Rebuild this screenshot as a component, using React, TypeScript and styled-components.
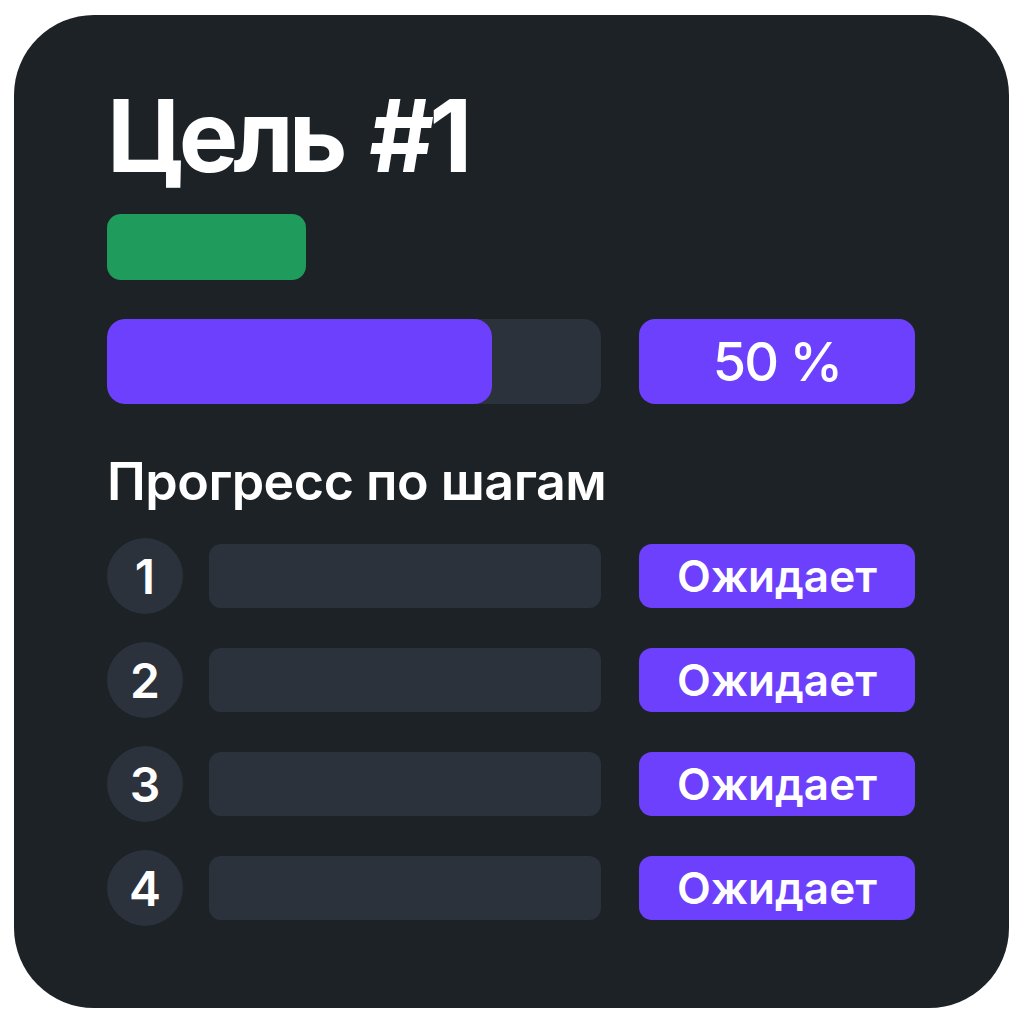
import React from "react";
import styled, { createGlobalStyle } from "styled-components";

const Global = createGlobalStyle`
  html, body { margin: 0; padding: 0; background: #ffffff; }
  body { font-family: Inter, "Noto Sans", sans-serif; }
`;

const Card = styled.div`
  box-sizing: border-box;
  margin: 15px 0 0 14px;
  width: 995px;
  height: 993px;
  border-radius: 80px;
  background: #1d2227;
  padding: 71px 94px 0 93px;
  display: flex;
  flex-direction: column;
  color: #ffffff;
`;

const Title = styled.h1`
  margin: 0;
  font-size: 100px;
  line-height: 100px;
  font-weight: 700;
  letter-spacing: -5px;
  word-spacing: 8px;
`;

const Tag = styled.div`
  margin-top: 28px;
  width: 199px;
  height: 66px;
  border-radius: 14px;
  background: #1f9b5c;
`;

const ProgressRow = styled.div`
  margin-top: 39px;
  display: grid;
  grid-template-columns: 1fr 276px;
  column-gap: 38px;
  height: 85px;
`;

const Track = styled.div`
  border-radius: 18px;
  background: #2c323b;
  overflow: hidden;
  display: flex;
`;

const Fill = styled.div`
  height: 100%;
  border-radius: 18px;
  background: #6d40fd;
`;

const Badge = styled.div<{ $big?: boolean }>`
  border-radius: ${(p) => (p.$big ? 16 : 13)}px;
  background: #6d40fd;
  display: flex;
  align-items: center;
  justify-content: center;
  font-size: ${(p) => (p.$big ? 54 : 44)}px;
  font-weight: ${(p) => (p.$big ? 500 : 600)};
  letter-spacing: ${(p) => (p.$big ? -2 : 0)}px;
  color: #ffffff;
`;

const Heading = styled.h2`
  margin: 52px 0 0;
  font-size: 52px;
  line-height: 52px;
  font-weight: 600;
  letter-spacing: -0.5px;
`;

const Steps = styled.div`
  margin-top: 36px;
  display: flex;
  flex-direction: column;
  gap: 40px;
`;

const StepRow = styled.div`
  display: grid;
  grid-template-columns: 76px 1fr 276px;
  grid-template-rows: 64px;
  column-gap: 26px;
  align-items: stretch;
`;

const Num = styled.div`
  align-self: center;
  width: 76px;
  height: 76px;
  margin: -6px 0 -6px;
  border-radius: 50%;
  background: #2c323b;
  display: flex;
  align-items: center;
  justify-content: center;
  font-size: 48px;
  font-weight: 600;
`;

const StepBar = styled.div`
  margin-right: 12px;
  border-radius: 12px;
  background: #2c323b;
`;

const steps = [1, 2, 3, 4];

export default function App() {
  const progress = 78;
  return (
    <>
      <Global />
      <Card>
        <Title>Цель #1</Title>
        <Tag />
        <ProgressRow>
          <Track>
            <Fill style={{ width: `${progress}%` }} />
          </Track>
          <Badge $big>50 %</Badge>
        </ProgressRow>
        <Heading>Прогресс по шагам</Heading>
        <Steps>
          {steps.map((n) => (
            <StepRow key={n}>
              <Num>{n}</Num>
              <StepBar />
              <Badge>Ожидает</Badge>
            </StepRow>
          ))}
        </Steps>
      </Card>
    </>
  );
}
